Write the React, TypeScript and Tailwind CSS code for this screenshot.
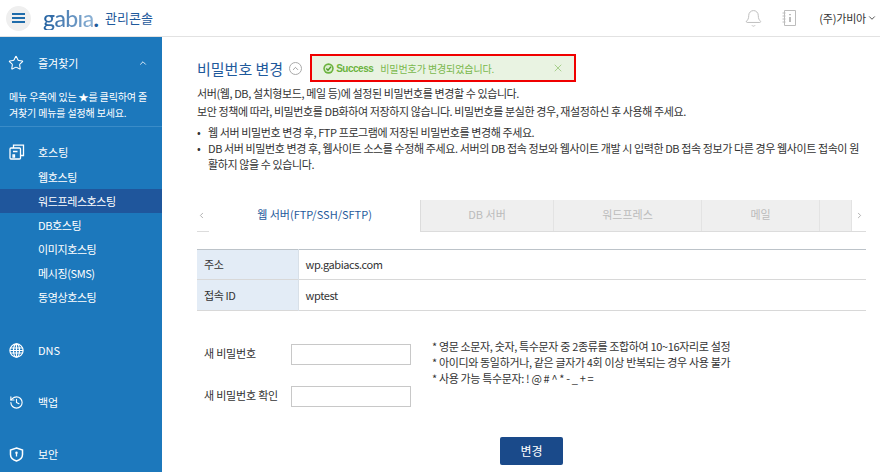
import { Bell, ChevronDown, ChevronLeft, ChevronRight, ChevronUp, History, Star, X } from 'lucide-react'

const subMenus = ['웹호스팅', '워드프레스호스팅', 'DB호스팅', '이미지호스팅', '메시징(SMS)', '동영상호스팅']
const tabs = [
  { label: 'DB 서버', width: 'w-[133px]' },
  { label: '워드프레스', width: 'w-[148px]' },
  { label: '메일', width: 'w-[118px]' },
  { label: '', width: 'w-[32px]' },
]

function HostingIcon() {
  return (
    <svg width="16" height="16" viewBox="0 0 16 16" fill="none" stroke="currentColor" strokeWidth="1.3">
      <rect x="1" y="4" width="10.5" height="11" rx="1" />
      <path d="M4.5 4V1.2h10v10.3h-3" />
      <path d="M4 7.5h4.5M4 11h1.5v2H4z" />
    </svg>
  )
}

function GlobeIcon() {
  return (
    <svg width="15" height="15" viewBox="0 0 15 15" fill="none" stroke="currentColor" strokeWidth="1.2">
      <circle cx="7.5" cy="7.5" r="6.6" />
      <ellipse cx="7.5" cy="7.5" rx="3" ry="6.6" />
      <path d="M7.5 1v13M1.2 5h12.6M1 7.5h13M1.2 10h12.6" />
    </svg>
  )
}

function ShieldIcon() {
  return (
    <svg width="15" height="15" viewBox="0 0 15 15" fill="none" stroke="currentColor" strokeWidth="1.5">
      <path d="M7.5 1 13.5 3v4.5c0 3.3-2.6 5.5-6 6.5-3.4-1-6-3.2-6-6.5V3z" />
      <circle cx="7.5" cy="5.8" r="1.2" fill="currentColor" stroke="none" />
      <path d="M7.5 6v3.5" strokeWidth="1.3" />
    </svg>
  )
}

function NotebookIcon() {
  return (
    <svg width="18" height="18" viewBox="0 0 18 18" fill="none" stroke="#bcbcbc" strokeWidth="1">
      <path d="M4.5 1.5h11v15h-11z" />
      <path d="M2.5 4h3M2.5 7h3M2.5 10h3M2.5 13h3" />
      <path d="M10 8v5M10 5v1.2" stroke="#999" strokeWidth="1.3" />
    </svg>
  )
}

function SuccessIcon() {
  return (
    <svg width="11" height="11" viewBox="0 0 11 11" fill="none">
      <circle cx="5.5" cy="5.5" r="5.2" fill="#6cb33f" />
      <circle cx="5.5" cy="5.5" r="3.6" fill="#dcefcf" />
      <path d="M3.3 5.5 5 7.2l3-3.4" stroke="#4f9a2a" strokeWidth="1.4" />
    </svg>
  )
}

export default function App() {
  return (
    <div className="h-[472px] w-[880px] overflow-hidden bg-white font-['Noto_Sans_CJK_KR','Noto_Sans',sans-serif] text-[11px] text-[#333]">
      <header className="flex h-[37px] items-center border-b border-[#e2e2e2] pl-[6px] pr-[3px]">
        <button className="flex h-[25px] w-[25px] items-center justify-center rounded-full bg-[#efefef]">
          <span className="flex w-[13px] flex-col gap-[2px]">
            <span className="h-[2px] bg-[#1f6cab]" />
            <span className="h-[2px] bg-[#1f6cab]" />
            <span className="h-[2px] bg-[#1f6cab]" />
          </span>
        </button>
        <span className="ml-[12px] bg-gradient-to-r from-[#1f5f9f] to-[#8fb4d6] bg-clip-text font-['Lato',sans-serif] text-[23px] leading-none font-medium tracking-[-0.6px] text-transparent">gabıa</span>
        <span className="font-['Lato',sans-serif] text-[23px] leading-none font-bold text-[#1f5a9c]">.</span>
        <span className="ml-[6px] text-[13px] text-[#1f5a9c]">관리콘솔</span>
        <Bell className="ml-auto text-[#bcbcbc]" size={19} strokeWidth={1.2} />
        <span className="ml-[17px]"><NotebookIcon /></span>
        <span className="ml-[21px] flex items-center gap-[1px] text-[11px] tracking-[-0.2px]">
          (주)가비아
          <ChevronDown size={10} strokeWidth={2} />
        </span>
      </header>

      <div className="flex h-[435px]">
        <aside className="w-[162px] shrink-0 bg-[#1c78bc] text-white">
          <div className="border-b border-[#3a8cc8] pb-[5px]">
            <div className="flex h-[52px] items-center pl-[8px] pr-[14px]">
              <Star size={16} strokeWidth={1.6} />
              <span className="ml-[14px]">즐겨찾기</span>
              <ChevronUp className="ml-auto" size={10} strokeWidth={2} />
            </div>
            <p className="px-[9px] text-[10px] leading-[16px] tracking-[-0.15px]">메뉴 우측에 있는 ★를 클릭하여 즐겨찾기 메뉴를 설정해 보세요.</p>
          </div>
          <div className="mt-[13px] flex h-[24px] items-center pl-[9px]">
            <HostingIcon />
            <span className="ml-[13px]">호스팅</span>
          </div>
          <ul className="mt-[1px] tracking-[-0.4px]">
            {subMenus.map((name) => (
              <li key={name} className={`flex h-[24px] items-center pl-[38px] ${name === '워드프레스호스팅' ? 'bg-[#1f569c]' : ''}`}>
                {name}
              </li>
            ))}
          </ul>
          <div className="mt-[15px] flex h-[52px] items-center pl-[9px]">
            <GlobeIcon />
            <span className="ml-[14px]">DNS</span>
          </div>
          <div className="flex h-[52px] items-center pl-[9px]">
            <History size={15} strokeWidth={1.8} />
            <span className="ml-[14px]">백업</span>
          </div>
          <div className="flex h-[52px] items-center pl-[9px]">
            <ShieldIcon />
            <span className="ml-[14px]">보안</span>
          </div>
        </aside>

        <main className="w-[718px] pl-[35px] pr-[14px]">
          <div className="flex items-center pt-[17px]">
            <h1 className="text-[15px] leading-[27px] font-normal text-[#1f5a9c]">비밀번호 변경</h1>
            <span className="ml-[6px] flex h-[13px] w-[13px] items-center justify-center rounded-full border border-[#aaa] text-[#666]">
              <ChevronUp size={9} strokeWidth={1.6} />
            </span>
            <div className="ml-[8px] flex h-[28px] w-[266px] items-center border-2 border-[#f00000] bg-[#e9f3e2] pl-[11px] pr-[10px] text-[#7ab84d]">
              <SuccessIcon />
              <span className="ml-[2px] font-['Liberation_Sans',sans-serif] text-[10px] font-bold tracking-[-0.5px] text-[#6cb33f]">Success</span>
              <span className="ml-[7px] text-[10px] tracking-[-0.1px]">비밀번호가 변경되었습니다.</span>
              <X className="ml-auto text-[#a8d08d]" size={12} strokeWidth={2} />
            </div>
          </div>

          <div className="tracking-[-0.4px]">
            <p className="mt-[2px] leading-[18px]">서버(웹, DB, 설치형보드, 메일 등)에 설정된 비밀번호를 변경할 수 있습니다.</p>
            <p className="leading-[18px]">보안 정책에 따라, 비밀번호를 DB화하여 저장하지 않습니다. 비밀번호를 분실한 경우, 재설정하신 후 사용해 주세요.</p>

            <ul className="mt-[4px] leading-[16px]">
              <li className="flex">
                <span className="w-[11px] shrink-0">•</span>
                <span>웹 서버 비밀번호 변경 후, FTP 프로그램에 저장된 비밀번호를 변경해 주세요.</span>
              </li>
              <li className="flex">
                <span className="w-[11px] shrink-0">•</span>
                <span>DB 서버 비밀번호 변경 후, 웹사이트 소스를 수정해 주세요. 서버의 DB 접속 정보와 웹사이트 개발 시 입력한 DB 접속 정보가 다른 경우 웹사이트 접속이 원활하지 않을 수 있습니다.</span>
              </li>
            </ul>
          </div>

          <div className="mt-[28px] flex h-[32px] items-stretch border-b border-[#dcdcdc]">
            <span className="flex w-[12px] items-center text-[#999]">
              <ChevronLeft size={9} />
            </span>
            <div className="-mb-px flex w-[212px] items-center justify-center border-r border-[#dcdcdc] bg-white pb-[3px] text-[#1f5a9c]">웹 서버(FTP/SSH/SFTP)</div>
            {tabs.map((tab, i) => (
              <div key={i} className={`flex ${tab.width} items-center justify-center border-r border-[#e3e3e3] bg-[#efefef] pb-[3px] text-[#bbb]`}>
                {tab.label}
              </div>
            ))}
            <span className="flex flex-1 items-center justify-center text-[#999]">
              <ChevronRight size={9} />
            </span>
          </div>

          <table className="mt-[17px] w-full border-t border-[#bcc3c9] tracking-[-0.4px]">
            <tbody>
              <tr className="h-[30px] border-b border-[#d8d8d8]">
                <th className="w-[101px] bg-[#e3ecf6] pl-[7px] text-left font-normal">주소</th>
                <td className="border-l border-[#d8e0e8] pl-[7px]">wp.gabiacs.com</td>
              </tr>
              <tr className="h-[31px] border-b border-[#d8d8d8]">
                <th className="bg-[#e3ecf6] pl-[7px] text-left font-normal">접속 ID</th>
                <td className="border-l border-[#d8e0e8] pl-[7px]">wptest</td>
              </tr>
            </tbody>
          </table>

          <div className="mt-[33px] flex">
            <div className="flex w-[214px] flex-col gap-[21px] pl-[7px]">
              <label className="flex items-center">
                <span className="w-[87px] pb-[3px] tracking-[-0.2px]">새 비밀번호</span>
                <input className="h-[21px] w-[120px] border border-[#c8c8c8]" />
              </label>
              <label className="flex items-center">
                <span className="w-[87px] pb-[3px] tracking-[-0.2px]">새 비밀번호 확인</span>
                <input className="h-[21px] w-[120px] border border-[#c8c8c8]" />
              </label>
            </div>
            <div className="-mt-[6px] ml-[21px] leading-[16px] tracking-[-0.35px]">
              <p>* 영문 소문자, 숫자, 특수문자 중 2종류를 조합하여 10~16자리로 설정</p>
              <p>* 아이디와 동일하거나, 같은 글자가 4회 이상 반복되는 경우 사용 불가</p>
              <p>* 사용 가능 특수문자: ! @ # ^ * - _ + =</p>
            </div>
          </div>

          <div className="mt-[30px] flex justify-center">
            <button className="h-[28px] w-[63px] rounded-[2px] bg-[#1a4a8a] text-[12px] text-white">변경</button>
          </div>
        </main>
      </div>
    </div>
  )
}
